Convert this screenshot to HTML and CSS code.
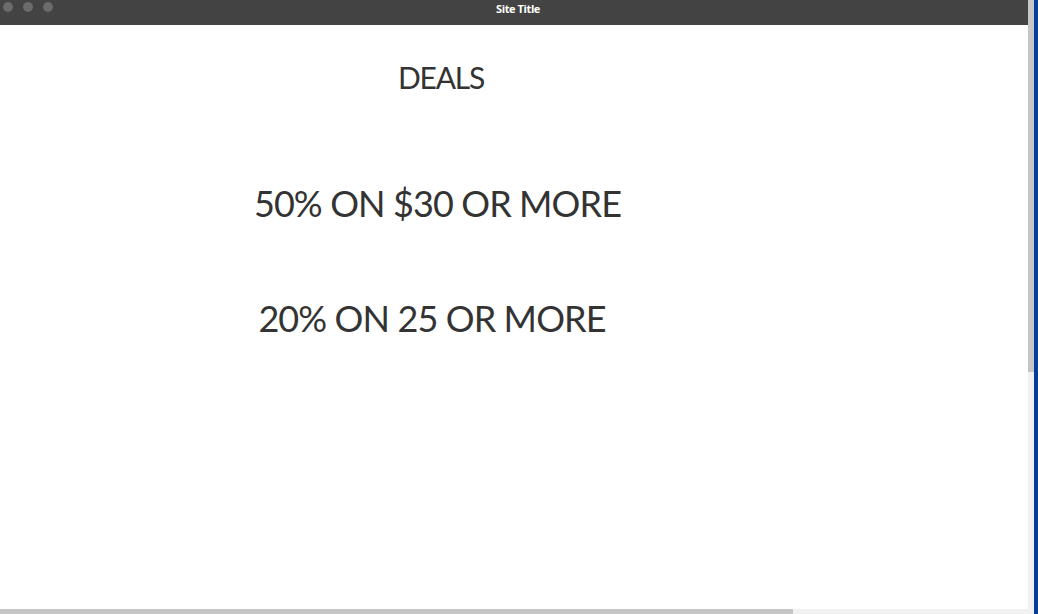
FILE: index.html
```html
<!DOCTYPE html>
<html lang="en">
<head>
<meta charset="UTF-8">
<meta name="viewport" content="width=device-width, initial-scale=1.0">
<title>Site Title</title>
<link rel="stylesheet" href="styles.css">
</head>
<body>

<div class="window">
    <div class="main">
        <div class="titlebar">
            <div class="dots">
                <span class="dot"></span>
                <span class="dot"></span>
                <span class="dot"></span>
            </div>
            <div class="site-title">Site Title</div>
        </div>

        <div class="content">
            <h2 class="deals-title">DEALS</h2>
            <div class="deal deal-first">50% ON $30 OR MORE</div>
            <div class="deal deal-second">20% ON 25 OR MORE</div>
        </div>

        <div class="hscroll">
            <div class="hscroll-thumb"></div>
        </div>
    </div>

    <div class="vscroll">
        <div class="vscroll-thumb"></div>
    </div>
    <div class="edge"></div>
</div>

</body>
</html>
```

FILE: styles.css
```css
body {
    margin: 0;
    overflow: hidden;
    font-family: Lato, "Open Sans", sans-serif;
    background-color: #fff;
}
.window {
    display: flex;
    width: 1038px;
    height: 614px;
}
.main {
    width: 1028px;
    display: flex;
    flex-direction: column;
}
.titlebar {
    height: 25px;
    background-color: #434343;
    display: flex;
    align-items: center;
    position: relative;
}
.dots {
    display: flex;
    gap: 10px;
    padding-left: 3px;
    margin-top: -11px;
}
.dot {
    width: 10px;
    height: 10px;
    border-radius: 50%;
    background-color: #6b6b6b;
}
.site-title {
    position: absolute;
    left: 0;
    right: -8px;
    top: 1px;
    text-align: center;
    color: #fff;
    font-family: "Open Sans", sans-serif;
    font-weight: bold;
    font-size: 11px;
    letter-spacing: -0.4px;
}
.content {
    flex: 1;
    width: 875px;
    padding-top: 34px;
    text-align: center;
    color: #333;
}
.deals-title {
    margin: 0;
    padding-left: 7px;
    font-size: 30px;
    font-weight: normal;
    line-height: 1.2;
    letter-spacing: -1.2px;
}
.deal {
    font-size: 36px;
    line-height: 1.2;
    letter-spacing: -0.9px;
}
.deal-first {
    margin-top: 87px;
}
.deal-second {
    margin-top: 72px;
    padding-right: 11px;
}
.hscroll {
    height: 5px;
    background-color: #f1f1f1;
}
.hscroll-thumb {
    width: 793px;
    height: 100%;
    background-color: #c6c6c6;
}
.vscroll {
    width: 6px;
    background-color: #f1f1f1;
}
.vscroll-thumb {
    height: 372px;
    background-color: #c6c6c6;
}
.edge {
    width: 4px;
    background-color: #0b3a9c;
}
```
